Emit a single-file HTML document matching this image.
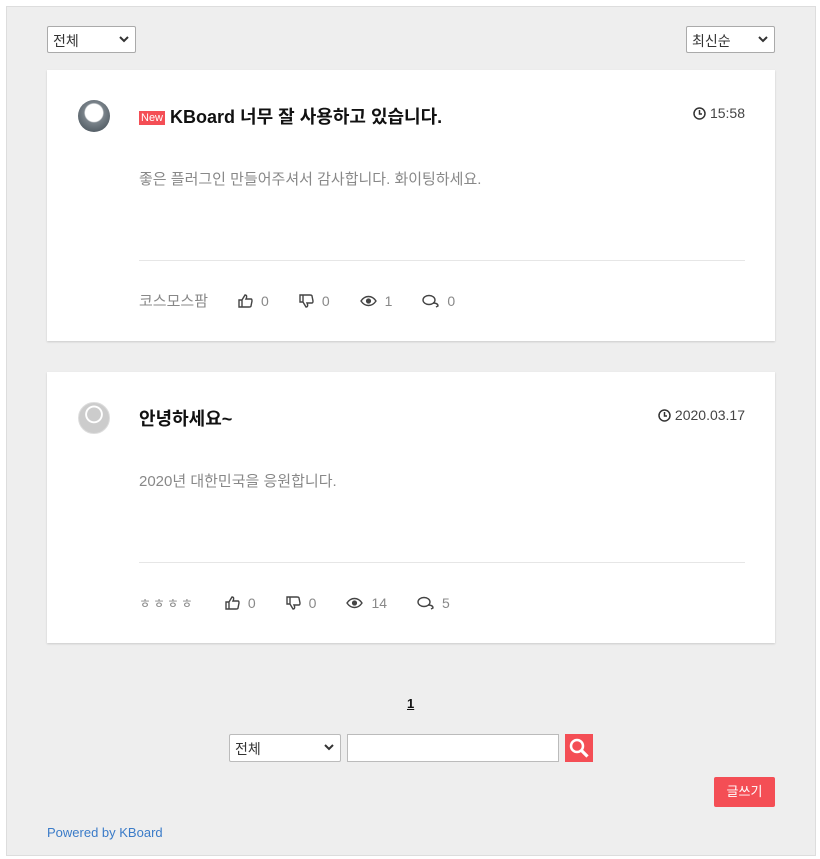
<!DOCTYPE html>
<html><head><meta charset="utf-8"><style>
*{box-sizing:border-box;margin:0;padding:0}
body{width:820px;height:859px;background:#fff;font-family:"Liberation Sans","Noto Sans CJK KR",sans-serif;position:relative;overflow:hidden}
.wrap{position:absolute;left:6px;top:6px;width:810px;height:850px;background:#eee;border:1px solid #ddd}
.sel{position:absolute;height:27px;border:1px solid #aaa;background:#fff;font-size:14px;color:#333;padding:4px 5px;border-radius:2px}
.sel svg{position:absolute;right:6px;top:9px}
.card{position:absolute;left:47px;width:728px;height:271px;background:#fff;box-shadow:0 1px 2px rgba(0,0,0,.15)}
.av{position:absolute;left:31px;top:30px;width:32px;height:32px;border-radius:50%}
.title{position:absolute;left:92px;top:33px;font-size:18px;font-weight:bold;color:#111}
.new{display:inline-block;background:#f44e55;color:#fff;font-size:11px;font-weight:normal;padding:1px 2px;vertical-align:2px;margin-right:5px;line-height:12px}
.time{position:absolute;right:30px;top:35px;font-size:14px;color:#444}
.time svg{vertical-align:-2px;margin-right:4px}
.content{position:absolute;left:92px;top:98px;font-size:15px;color:#888}
.hr{position:absolute;left:92px;right:30px;top:190px;border-top:1px solid #e6e6e6}
.meta{position:absolute;left:92px;top:220px;font-size:14px;color:#888;display:flex;align-items:center}
.meta span.n{font-size:15px;margin-right:30px}
.meta span.i{display:inline-flex;align-items:center;margin-right:30px}
.meta svg{margin-right:8px}
</style></head><body>
<div class="wrap"></div>
<div class="sel" style="left:47px;top:26px;width:89px">전체<svg width="10" height="7"><path d="M1 1l4 4 4-4" stroke="#333" stroke-width="2" fill="none"/></svg></div>
<div class="sel" style="left:686px;top:26px;width:89px">최신순<svg width="10" height="7"><path d="M1 1l4 4 4-4" stroke="#333" stroke-width="2" fill="none"/></svg></div>

<div class="card" style="top:70px">
<div class="av" style="background:radial-gradient(circle at 50% 40%,#fff 0 35%,#7a838a 40%,#3d4850 100%)"></div>
<div class="title"><span class="new">New</span>KBoard 너무 잘 사용하고 있습니다.</div>
<div class="time"><svg width="13" height="13"><circle cx="6.5" cy="6.5" r="5.5" stroke="#333" stroke-width="1.5" fill="none"/><path d="M6.5 3v4h2.5" stroke="#333" stroke-width="1.5" fill="none"/></svg>15:58</div>
<div class="content">좋은 플러그인 만들어주셔서 감사합니다. 화이팅하세요.</div>
<div class="hr"></div>
<div class="meta"><span class="n">코스모스팜</span>
<span class="i"><svg width="15" height="14"><path d="M1 6h3v7H1zM4 6l3-5c2 0 2 2 1 4h5c1 0 1 1 1 2l-1 5c0 1-1 1-2 1H4" stroke="#444" stroke-width="1.4" fill="none"/></svg>0</span>
<span class="i"><svg width="15" height="14"><path d="M1 8h3V1H1zM4 8l3 5c2 0 2-2 1-4h5c1 0 1-1 1-2l-1-5c0-1-1-1-2-1H4" stroke="#444" stroke-width="1.4" fill="none"/></svg>0</span>
<span class="i"><svg width="17" height="12"><path d="M1 6c4-6 11-6 15 0c-4 6-11 6-15 0z" stroke="#444" stroke-width="1.4" fill="none"/><circle cx="8.5" cy="6" r="2.6" fill="#444"/></svg>1</span>
<span class="i"><svg width="17" height="14"><ellipse cx="7" cy="6" rx="6" ry="4.5" stroke="#444" stroke-width="1.4" fill="#fff"/><path d="M11 9c3 0 5 1 5 3l-2 1" stroke="#444" stroke-width="1.4" fill="none"/></svg>0</span></div>
</div>

<div class="card" style="top:372px">
<div class="av" style="background:radial-gradient(circle at 50% 38%,#ccc 0 28%,#fff 30% 36%,#ccc 38%);border:1px solid #ddd"></div>
<div class="title">안녕하세요~</div>
<div class="time"><svg width="13" height="13"><circle cx="6.5" cy="6.5" r="5.5" stroke="#333" stroke-width="1.5" fill="none"/><path d="M6.5 3v4h2.5" stroke="#333" stroke-width="1.5" fill="none"/></svg>2020.03.17</div>
<div class="content">2020년 대한민국을 응원합니다.</div>
<div class="hr"></div>
<div class="meta" style="top:221px"><span class="n" style="font-size:13px;letter-spacing:2px">ㅎㅎㅎㅎ</span>
<span class="i"><svg width="15" height="14"><path d="M1 6h3v7H1zM4 6l3-5c2 0 2 2 1 4h5c1 0 1 1 1 2l-1 5c0 1-1 1-2 1H4" stroke="#444" stroke-width="1.4" fill="none"/></svg>0</span>
<span class="i"><svg width="15" height="14"><path d="M1 8h3V1H1zM4 8l3 5c2 0 2-2 1-4h5c1 0 1-1 1-2l-1-5c0-1-1-1-2-1H4" stroke="#444" stroke-width="1.4" fill="none"/></svg>0</span>
<span class="i"><svg width="17" height="12"><path d="M1 6c4-6 11-6 15 0c-4 6-11 6-15 0z" stroke="#444" stroke-width="1.4" fill="none"/><circle cx="8.5" cy="6" r="2.6" fill="#444"/></svg>14</span>
<span class="i"><svg width="17" height="14"><ellipse cx="7" cy="6" rx="6" ry="4.5" stroke="#444" stroke-width="1.4" fill="#fff"/><path d="M11 9c3 0 5 1 5 3l-2 1" stroke="#444" stroke-width="1.4" fill="none"/></svg>5</span></div>
</div>

<div style="position:absolute;left:407px;top:696px;font-size:13px;font-weight:bold;text-decoration:underline;color:#111">1</div>
<div class="sel" style="left:229px;top:734px;width:112px;height:28px;border-color:#bbb">전체<svg width="10" height="7"><path d="M1 1l4 4 4-4" stroke="#333" stroke-width="2" fill="none"/></svg></div>
<div style="position:absolute;left:347px;top:734px;width:212px;height:28px;border:1px solid #bbb;background:#fff"></div>
<div style="position:absolute;left:565px;top:734px;width:28px;height:28px;background:#f44e55"><svg width="28" height="28"><circle cx="12" cy="12" r="6" stroke="#fff" stroke-width="2.5" fill="none"/><path d="M16.5 16.5l6 6" stroke="#fff" stroke-width="3.2"/></svg></div>
<div style="position:absolute;left:714px;top:777px;width:61px;height:30px;background:#f44e55;color:#fff;font-size:13px;text-align:center;line-height:30px;border-radius:2px">글쓰기</div>
<div style="position:absolute;left:47px;top:825px;font-size:13px;color:#3a7bc8">Powered by KBoard</div>
</body></html>
